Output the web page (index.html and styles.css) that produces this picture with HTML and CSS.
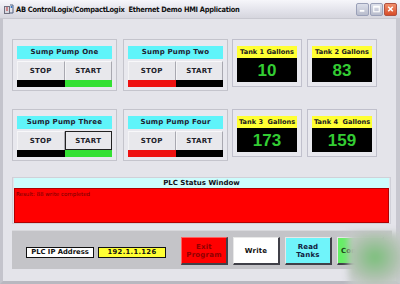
FILE: index.html
```html
<!DOCTYPE html>
<html>
<head>
<meta charset="utf-8">
<link rel="stylesheet" href="styles.css">
</head>
<body>
<div class="window">
  <div class="titlebar">
    <svg class="appicon" width="10" height="10" viewBox="0 0 10 10">
      <rect x="0.5" y="2.5" width="5" height="7" fill="#d8d8e0" stroke="#707080"/>
      <path d="M6 1 L9 1 L9 9 L6 9" fill="none" stroke="#506080"/>
      <path d="M2 4 L4 4 M2 6 L4 6" stroke="#c03030"/>
      <circle cx="7.5" cy="3" r="1" fill="#3070c0"/>
    </svg>
    <span class="title">AB ControlLogix/CompactLogix&nbsp; Ethernet Demo HMI Application</span>
    <div class="winbtns">
      <span class="wbtn"><svg width="12" height="12" viewBox="0 0 12 12"><rect x="3" y="7" width="5" height="2" fill="#fff"/></svg></span>
      <span class="wbtn"><svg width="12" height="12" viewBox="0 0 12 12"><rect x="3" y="3" width="6" height="6" fill="none" stroke="#fff" stroke-width="1.2"/><rect x="3" y="3" width="6" height="1.5" fill="#fff"/></svg></span>
      <span class="wbtn close"><svg width="12" height="12" viewBox="0 0 12 12"><path d="M3.5 3.5 L8.5 8.5 M8.5 3.5 L3.5 8.5" stroke="#fff" stroke-width="1.6"/></svg></span>
    </div>
  </div>
  <div class="client">
    <div class="row">
      <div class="pump">
        <div class="phead">Sump Pump One</div>
        <div class="pbtns"><span class="pbtn">STOP</span><span class="pbtn">START</span></div>
        <div class="pbar"><span class="black"></span><span class="green"></span></div>
      </div>
      <div class="pump">
        <div class="phead">Sump Pump Two</div>
        <div class="pbtns"><span class="pbtn">STOP</span><span class="pbtn">START</span></div>
        <div class="pbar"><span class="red"></span><span class="black"></span></div>
      </div>
      <div class="tank">
        <div class="thead">Tank 1 Gallons</div>
        <div class="tval">10</div>
      </div>
      <div class="tank">
        <div class="thead">Tank 2 Gallons</div>
        <div class="tval">83</div>
      </div>
    </div>
    <div class="row row2">
      <div class="pump">
        <div class="phead">Sump Pump Three</div>
        <div class="pbtns"><span class="pbtn">STOP</span><span class="pbtn focus">START</span></div>
        <div class="pbar"><span class="black"></span><span class="green"></span></div>
      </div>
      <div class="pump">
        <div class="phead">Sump Pump Four</div>
        <div class="pbtns"><span class="pbtn">STOP</span><span class="pbtn">START</span></div>
        <div class="pbar"><span class="red"></span><span class="black"></span></div>
      </div>
      <div class="tank">
        <div class="thead">Tank 3&nbsp; Gallons</div>
        <div class="tval">173</div>
      </div>
      <div class="tank">
        <div class="thead">Tank 4&nbsp; Gallons</div>
        <div class="tval">159</div>
      </div>
    </div>
    <div class="status">
      <div class="shead">PLC Status Window</div>
      <div class="sbody">Result: 88 write completed</div>
    </div>
    <div class="controls">
      <span class="iplabel">PLC IP Address</span>
      <span class="ipval">192.1.1.126</span>
      <div class="cbtns">
        <span class="cbtn exit">Exit<br>Program</span>
        <span class="cbtn write">Write</span>
        <span class="cbtn read">Read<br>Tanks</span>
        <span class="cbtn conn">Connect</span>
      </div>
    </div>
  </div>
  <div class="blob"></div>
</div>
</body>
</html>
```
FILE: styles.css
```css
* { box-sizing: border-box; }
html, body { margin: 0; padding: 0; }
body { width: 400px; height: 284px; overflow: hidden; background: #e4e4ea; }
.window {
  position: relative;
  width: 400px; height: 284px;
  background: #e4e4ea;
  border-left: 3px solid #c4c4cc;
  border-right: 4px solid #c8c8d0;
  border-bottom: 3px solid #b8b8c0;
  font-family: "DejaVu Sans", sans-serif;
  font-weight: bold;
  color: #111;
  display: flex; flex-direction: column;
}
.titlebar {
  height: 19px;
  margin-left: -3px; margin-right: -4px;
  background: linear-gradient(#f6f6fa, #e2e2ea 60%, #d6d6de);
  border-bottom: 1px solid #c8c8d0;
  display: flex; align-items: center;
  padding: 0 3px 0 4px;
}
.appicon { flex: none; margin-right: 2px; }
.title {
  font-family: "DejaVu Sans Condensed", "DejaVu Sans", sans-serif;
  font-stretch: condensed;
  font-size: 7.4px; font-weight: bold; color: #101010;
  letter-spacing: -0.25px;
  white-space: nowrap;
}
.winbtns { margin-left: auto; display: flex; gap: 1px; }
.wbtn {
  width: 13px; height: 13px;
  border: 1px solid #9aa0b8; border-radius: 2px;
  background: linear-gradient(#dcdfea, #b8bccc);
  display: flex; align-items: center; justify-content: center;
}
.wbtn.close { background: linear-gradient(#f0906c, #d84c28); border-color: #b05040; }
.client { padding: 20px 0 0 9px; display: flex; flex-direction: column; }
.row { display: flex; align-items: flex-start; }
.row2 { margin-top: 18px; }
.pump {
  width: 105px; height: 52px;
  border: 1px solid #c4c4cc;
  background: #e8e8ee;
  padding: 6px 4px 0 4px;
  margin-right: 6px;
}
.pump + .pump { margin-right: 4px; }
.phead {
  height: 13px;
  background: #5ff4fa;
  font-size: 7px; color: #202030;
  text-align: center; line-height: 13px;
  letter-spacing: 0.2px;
}
.pbtns { display: flex; height: 19px; margin-top: 2px; }
.pbtn {
  flex: 1;
  background: #e8e8ec;
  border-top: 1px solid #f8f8fa;
  border-left: 1px solid #f4f4f6;
  border-right: 1px solid #a8a8b0;
  font-size: 7px; color: #202028;
  display: flex; align-items: center; justify-content: center;
  letter-spacing: 0.3px;
}
.pbtn.focus { border: 1px solid #222; }
.pbar { display: flex; height: 7px; }
.pbar span { flex: 1; }
.black { background: #000; }
.green { background: #33e033; }
.red { background: #ee1010; }
.tank {
  width: 70px; height: 48px;
  border: 1px solid #c0c0cc;
  background: #e8e8ee;
  padding: 6px 4px 0 4px;
  margin-right: 5px;
}
.thead {
  height: 12px; background: #ffff33;
  font-size: 6.6px; color: #202020;
  text-align: center; line-height: 12px;
  white-space: nowrap;
}
.tval {
  height: 24px; background: #000;
  color: #33cc33;
  font-family: "Liberation Sans", Arial, sans-serif;
  font-size: 17px; font-weight: bold;
  text-align: center; line-height: 25px;
}
.status {
  margin-top: 16px;
  width: 379px;
  border: 1px solid #d0d0d8;
  padding: 0 1px;
}
.shead {
  height: 10px; background: #ccfcfc;
  font-size: 7px; text-align: center; line-height: 10px;
  color: #101018;
}
.sbody {
  height: 35px; background: #ff0000;
  border: 1px solid #b00000;
  font-size: 5.5px; font-weight: normal; color: #700000;
  padding: 2px 1px;
  line-height: 7px;
}
.controls {
  margin-top: 6px;
  width: 380px; height: 39px;
  background: #c4c4c8;
  border-top: 1px solid #d8d8dc;
  display: flex; align-items: center;
  padding-left: 14px;
}
.iplabel {
  width: 68px; height: 11px;
  background: #fff; border: 1px solid #111;
  font-size: 6.8px; text-align: center; line-height: 9px;
  margin-top: 4px;
}
.ipval {
  width: 68px; height: 11px; margin-left: 4px;
  background: #ffff33; border: 1px solid #111;
  font-size: 6.8px; text-align: center; line-height: 9px;
  margin-top: 4px;
  letter-spacing: 0.3px;
}
.cbtns { display: flex; gap: 5px; margin-left: 15px; margin-top: 2px; }
.cbtn {
  width: 47px; height: 28px;
  display: flex; align-items: center; justify-content: center;
  text-align: center;
  font-size: 7px; line-height: 8px;
  border-top: 1px solid #e8e8e8; border-left: 1px solid #e8e8e8;
  border-right: 2px solid #404048; border-bottom: 2px solid #404048;
  letter-spacing: 0.2px;
}
.exit { background: #ff0000; color: #900000; border-top-color: #ff6060; border-left-color: #ff6060; }
.write { background: #ffffff; color: #111; }
.read { background: #70f4fa; color: #102040; }
.conn { background: #66ee66; color: #104010; justify-content: flex-start; padding-left: 3px; }
.blob {
  position: absolute;
  left: 345px; top: 232px;
  width: 60px; height: 56px;
  background: radial-gradient(ellipse at 45% 45%, #7ac07a 0%, #9cc09c 30%, #b8c4b8 55%, rgba(200,204,204,0.9) 75%, rgba(220,220,226,0) 100%);
  filter: blur(3px);
}
```
